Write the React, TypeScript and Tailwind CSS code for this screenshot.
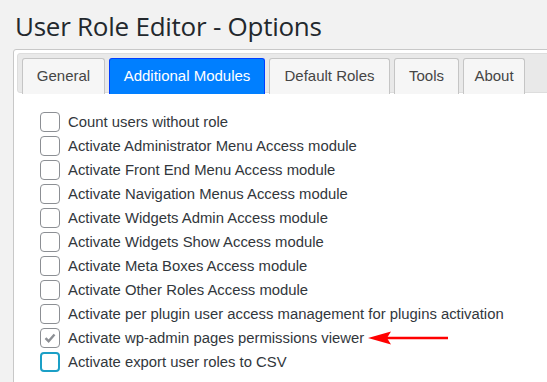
import React from "react";

const items = [
  "Count users without role",
  "Activate Administrator Menu Access module",
  "Activate Front End Menu Access module",
  "Activate Navigation Menus Access module",
  "Activate Widgets Admin Access module",
  "Activate Widgets Show Access module",
  "Activate Meta Boxes Access module",
  "Activate Other Roles Access module",
  "Activate per plugin user access management for plugins activation",
  "Activate wp-admin pages permissions viewer",
  "Activate export user roles to CSV",
];

const tabs = [
  { label: "General", w: "w-[83px]" },
  { label: "Additional Modules", w: "w-[156px]", active: true },
  { label: "Default Roles", w: "w-[121px]" },
  { label: "Tools", w: "w-[65px]" },
  { label: "About", w: "w-[62px]" },
];

export default function App() {
  return (
    <div className="w-[547px] h-[382px] overflow-hidden bg-[#f2f2f2] font-['Liberation_Sans',Arial,sans-serif]">
      <h1 className="pl-[15px] pt-[9px] h-[49px] text-[26px] leading-[34px] tracking-[-0.25px] text-[#23282d] font-['Open_Sans',sans-serif] font-normal">
        User Role Editor - Options
      </h1>
      <div className="ml-[13px] w-[560px] h-[400px] border border-[#c8c8c8] rounded-[3px] bg-white p-[3px]">
        <div className="flex h-[40px] border border-[#dddddd] bg-[#e9e9e9] rounded-[3px] pl-[4px] pt-[4px] gap-[4px]">
          {tabs.map((t) => (
            <div
              key={t.label}
              className={`${t.w} h-[36px] flex items-center justify-center text-[15px] rounded-t-[3px] border border-b-0 ${
                t.active
                  ? "bg-[#007fff] border-[#003eff] text-white"
                  : "bg-[#f6f6f6] border-[#c5c5c5] text-[#454545]"
              }`}
            >
              {t.label}
            </div>
          ))}
        </div>
        <div className="pt-[17px] pl-[23px] flex flex-col">
          {items.map((label, i) => {
            const checked = i === 9;
            const focused = i === 10;
            return (
              <div key={label} className="flex items-center h-[24px]">
                <div
                  className={`w-[20px] h-[20px] rounded-[4px] flex items-center justify-center bg-white ${
                    focused ? "border-2 border-[#1b9fc6]" : "border border-[#8c8f94]"
                  }`}
                >
                  {checked && (
                    <svg width="14" height="14" viewBox="0 0 14 14">
                      <path d="M2.5 7.2 L5.6 10.2 L11.5 3.5" fill="none" stroke="#8c8f94" strokeWidth="2.4" />
                    </svg>
                  )}
                </div>
                <span className="ml-[8px] text-[14.85px] text-[#32373c] whitespace-nowrap">{label}</span>
                {checked && (
                  <svg className="ml-[4px]" width="80" height="16" viewBox="0 0 80 16">
                    <line x1="18" y1="8" x2="80" y2="8" stroke="#f00" strokeWidth="2.5" />
                    <path d="M0 8 L23 1.5 L19 8 L23 14.5 Z" fill="#f00" />
                  </svg>
                )}
              </div>
            );
          })}
        </div>
      </div>
    </div>
  );
}
